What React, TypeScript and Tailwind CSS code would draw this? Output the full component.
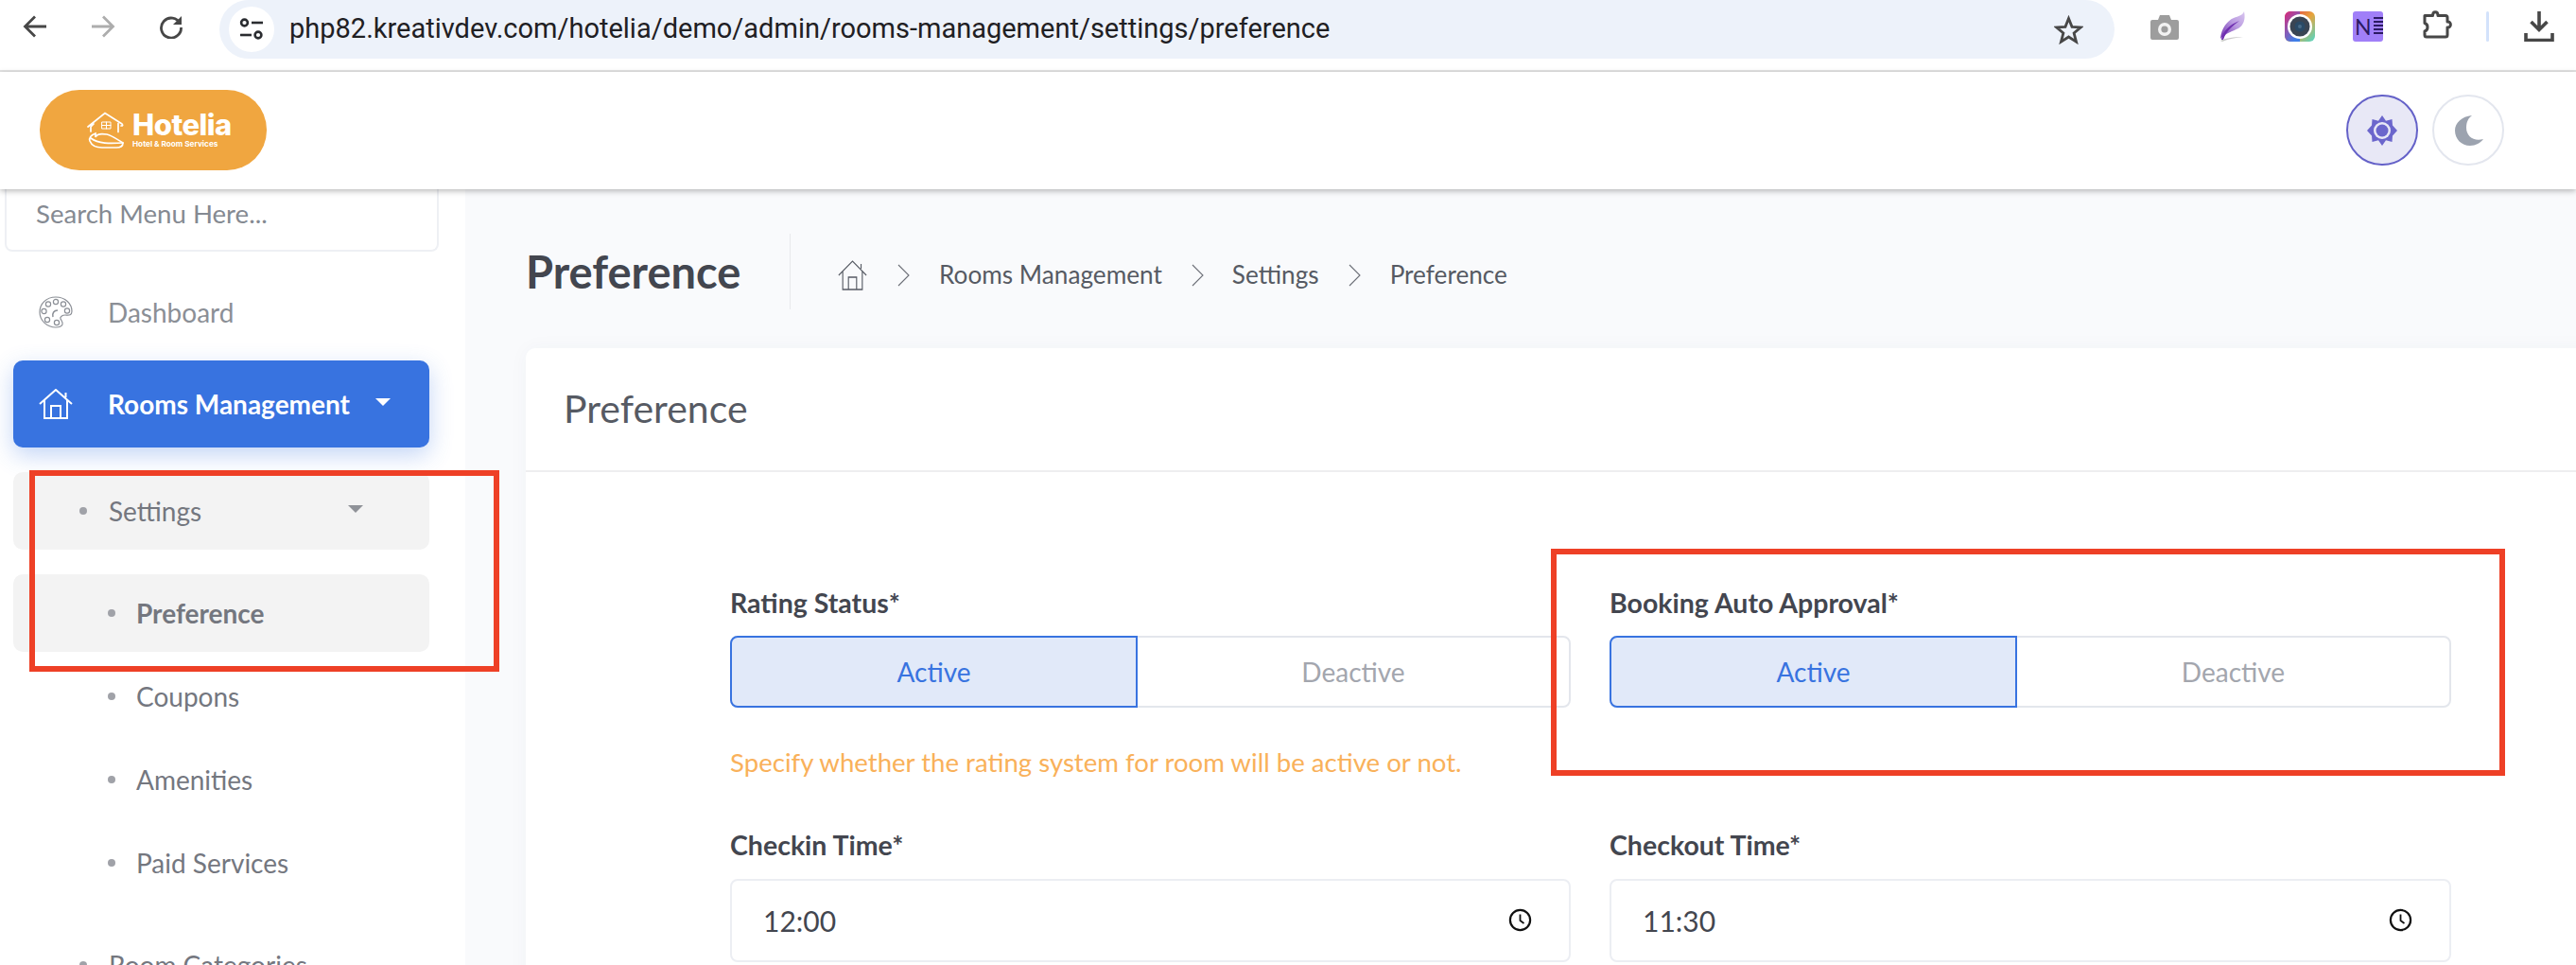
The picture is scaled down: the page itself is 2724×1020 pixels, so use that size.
import React from "react";

const Back = ({ c = "#474747", flip = false }: { c?: string; flip?: boolean }) => (
  <svg width="26" height="26" viewBox="0 0 26 26" fill="none" stroke={c} strokeWidth="2.8" style={{ transform: flip ? "scaleX(-1)" : undefined }}>
    <path d="M25 13H3M13 2.5 2.5 13 13 23.5" />
  </svg>
);

const Reload = () => (
  <svg width="26" height="26" viewBox="0 0 26 26" fill="none" stroke="#474747" strokeWidth="2.8">
    <path d="M22.5 10A10.5 10.5 0 1 0 23.5 14" />
    <path d="M24 2v9h-9" fill="#474747" stroke="none" />
  </svg>
);

const Tune = () => (
  <svg width="26" height="24" viewBox="0 0 26 24" fill="none" stroke="#2a2c30" strokeWidth="2.6">
    <circle cx="5.5" cy="5" r="3.4" />
    <path d="M13 5h12" />
    <circle cx="20" cy="18" r="3.4" />
    <path d="M1 18h12" />
  </svg>
);

const Star = () => (
  <svg width="31" height="31" viewBox="0 0 31 31" fill="none" stroke="#474747" strokeWidth="2.8" strokeLinejoin="miter">
    <path d="M15.5 3.5 19 12.3l9.4.6-7.3 6 2.4 9.2-8-5.1-8 5.1 2.4-9.2-7.3-6 9.4-.6z" />
  </svg>
);

const Camera = () => (
  <svg width="30" height="28" viewBox="0 0 30 28">
    <path d="M2 6h6l2-5h10l2 5h6a2 2 0 0 1 2 2v17a2 2 0 0 1-2 2H2a2 2 0 0 1-2-2V8a2 2 0 0 1 2-2z" fill="#9d9d9d" />
    <circle cx="15" cy="16" r="7" fill="#f2f2f2" />
    <circle cx="15" cy="16" r="3.6" fill="#9d9d9d" />
  </svg>
);

const Feather = () => (
  <svg width="30" height="32" viewBox="0 0 30 32">
    <defs>
      <linearGradient id="fe" x1="0" y1="1" x2="1" y2="0">
        <stop offset="0" stopColor="#6f2fb0" />
        <stop offset="0.55" stopColor="#b99ae0" />
        <stop offset="1" stopColor="#d9c6ef" />
      </linearGradient>
    </defs>
    <path d="M1 29C2 18 8 10 15 7c5-2 10-3 11-7 2 9-1 15-6 18-6 3-14 5-19 11z" fill="url(#fe)" />
    <path d="M2 30c1-9 9-16 19-20-7 5-14 11-17 20z" fill="#6f2fb0" />
    <path d="M1 31c6-3 14-4 24-4-8 1-15 2-22 5z" fill="#c9c9c9" />
  </svg>
);

const Lens = () => (
  <svg width="32" height="32" viewBox="0 0 32 32">
    <defs>
      <linearGradient id="le" x1="0" y1="0" x2="1" y2="1">
        <stop offset="0" stopColor="#e0264e" />
        <stop offset="0.5" stopColor="#e8a33a" />
        <stop offset="1" stopColor="#4fd8c8" />
      </linearGradient>
      <linearGradient id="lf" x1="0" y1="0" x2="0.6" y2="1">
        <stop offset="0" stopColor="#d9277f" stopOpacity="0.9" />
        <stop offset="1" stopColor="#3f7fe8" />
      </linearGradient>
    </defs>
    <rect width="32" height="32" rx="6" fill="url(#le)" />
    <path d="M6 0H16V32H6a6 6 0 0 1-6-6V6a6 6 0 0 1 6-6z" fill="url(#lf)" />
    <circle cx="16" cy="16" r="13" fill="#fff" />
    <circle cx="16" cy="16" r="10.5" fill="#3a4553" />
    <circle cx="16" cy="16" r="5.5" fill="#2a4a66" />
    <circle cx="16" cy="16" r="2" fill="#4a6c88" />
  </svg>
);

const Puzzle = () => (
  <svg width="32" height="32" viewBox="0 0 32 32" fill="none" stroke="#474747" strokeWidth="3" strokeLinejoin="round">
    <path d="M3 6.5h8.5c0-5 5.5-5 5.5 0H25a2 2 0 0 1 2 2V13c4.500-.5 4.500 6.500 0 6v8a2 2 0 0 1-2 2H5a2 2 0 0 1-2-2v-4c4-1 4-7.500 0-8.500z" />
  </svg>
);

const Download = () => (
  <svg width="32" height="32" viewBox="0 0 32 32" fill="none" stroke="#474747" strokeWidth="3.6">
    <path d="M16 0v19M7.500 11 16 19.500 24.500 11M2 23v7.500h28V23" />
  </svg>
);

const HouseLogo = () => (
  <svg width="40" height="40" viewBox="0 0 40 40" fill="none" stroke="#fff" strokeWidth="1.7" strokeLinecap="round">
    <path d="M1 16 19 1.500 37 13c1 1 1 2-1 2M7 13l-3 3v5M33 12.500v9" />
    <path d="M16 11h9v7h-9zM20.500 11v7M16 14.500h9" strokeWidth="1" />
    <path d="M9 23c-5 2-7 5-6 8 2 5 8 7 13 7h15c5 0 7-2 7-5-5-3-12-8-17-9-6-1-11 0-12 3z" />
    <path d="M4 28c8 6 20 6 34 5" />
  </svg>
);

const Sun = () => (
  <svg width="32" height="32" viewBox="0 0 32 32">
    <path fill="#6b66cc" d="M16 0l4 5.700 6.500-1.800.5 6.600L32 16l-5 5.500-.5 6.600-6.500-1.800L16 32l-4-5.700-6.500 1.800-.5-6.600L0 16l5-5.500.5-6.600 6.500 1.800z" />
    <circle cx="16" cy="16" r="9" fill="#e8e8f6" />
    <circle cx="16" cy="16" r="6.500" fill="#6b66cc" />
  </svg>
);

const Moon = () => (
  <svg width="30" height="32" viewBox="0 0 30 32">
    <path fill="#9ca3af" d="M18 0C7 1 0 8 0 16c0 9 7 16 16 16 6 0 11-3 14-7-10 3-18-3-18-12 0-6 2-10 6-13z" />
  </svg>
);

const Palette = () => (
  <svg width="36" height="34" viewBox="0 0 36 34" fill="none" stroke="#8b8f96" strokeWidth="1.2">
    <path d="M18 1C8 1 1 8 1 17s8 16 17 16c4 0 6-1 7-3s-1-4-2-6 2-4 5-4 7 1 7-4C35 8 28 1 18 1z" />
    <circle cx="18" cy="6" r="2.600" />
    <circle cx="10" cy="8.500" r="2.600" />
    <circle cx="26" cy="8.500" r="2.600" />
    <circle cx="5.500" cy="16" r="2.600" />
    <circle cx="30" cy="15.500" r="2.600" />
    <circle cx="9" cy="25" r="2.600" />
    <circle cx="19" cy="28" r="2.600" />
    <path d="M15 22c-1-4 1-7 5-7" strokeWidth="1.500" />
  </svg>
);

const HomeIcon = ({ c, sw, w, h }: { c: string; sw: number; w: number; h: number }) => (
  <svg width={w} height={h} viewBox="0 0 36 32" fill="none" stroke={c} strokeWidth={sw} preserveAspectRatio="none">
    <path d="M1 16 18 1l17 15M28.500 9V4M6 12v19h24V12M13 31V18h10v13" />
  </svg>
);

const Chevron = () => (
  <svg width="13" height="24" viewBox="0 0 13 24" fill="none" stroke="#6b6e76" strokeWidth="1.100">
    <path d="M1 1l11 11L1 23" />
  </svg>
);

const Clock = () => (
  <svg width="25" height="25" viewBox="0 0 25 25" fill="none" stroke="#111" strokeWidth="2.200">
    <circle cx="12.500" cy="12.500" r="10.600" />
    <path d="M12.500 6.500v6.500l4 3" strokeWidth="1.800" />
  </svg>
);

const Caret = ({ c }: { c: string }) => (
  <svg width="16" height="8" viewBox="0 0 16 8">
    <path d="M0 0h16L8 8z" fill={c} />
  </svg>
);

const Dot = () => <span className="w-2 h-2 rounded-full bg-[#a0a2a8] shrink-0" />;

const SubItem = ({ label, bold, active }: { label: string; bold?: boolean; active?: boolean }) => (
  <div className={`flex items-center h-[82px] rounded-[10px] pl-[100px] gap-[22px] text-[28px] text-[#74777f] ${active ? "bg-[#f3f3f3]" : ""} ${bold ? "font-bold" : ""}`}>
    <Dot />
    <span>{label}</span>
  </div>
);

const Toggle = () => (
  <div className="flex h-[76px] rounded-lg border-2 border-[#e3e6ec]">
    <div className="w-[431px] -m-[2px] mr-0 flex items-center justify-center rounded-l-lg border-2 border-[#3873e0] bg-[#e1e9f9] text-[#3873e0] text-[28px]">Active</div>
    <div className="flex-1 flex items-center justify-center text-[#a3a6ae] text-[28px]">Deactive</div>
  </div>
);

const TimeInput = ({ value }: { value: string }) => (
  <div className="flex items-center justify-between h-[88px] rounded-lg border-2 border-[#eceef3] pl-[33px] pr-[39px] text-[#43464f] text-[30px]">
    <span>{value}</span>
    <span className="-mt-[1px]"><Clock /></span>
  </div>
);

const Label = ({ children }: { children: React.ReactNode }) => (
  <div className="h-[36px] flex items-center text-[28.5px] font-bold text-[#43464f]">{children}</div>
);

export default function App() {
  return (
    <div className="relative w-[2724px] h-[1020px] overflow-hidden bg-white font-['Lato',sans-serif] flex flex-col">
      {/* browser toolbar */}
      <div className="h-[76px] shrink-0 border-b-2 border-[#e3e3e3] flex bg-white">
        <div className="flex items-start pl-[24px] pt-[15px] gap-[46px] w-[232px]">
          <Back />
          <Back c="#adadad" flip />
          <Reload />
        </div>
        <div className="w-[2004px] h-[62px] bg-[#edf2fa] rounded-r-[31px] rounded-l-[31px] flex items-center pl-[10px] pr-[33px]">
          <div className="w-[48px] h-[48px] rounded-full bg-white flex items-center justify-center">
            <Tune />
          </div>
          <span className="ml-[16px] flex-1 font-['Roboto',sans-serif] text-[29px] text-[#1f2023]">php82.kreativdev.com/hotelia/demo/admin/rooms-management/settings/preference</span>
          <Star />
        </div>
        <div className="flex items-start pt-[12px]">
          <div className="ml-[38px] mt-[3px]"><Camera /></div>
          <div className="ml-[43px]"><Feather /></div>
          <div className="ml-[39px]"><Lens /></div>
          <div className="ml-[40px] w-[32px] h-[32px] rounded-[3px] bg-[#a07ff8] flex items-center text-[#2b1a63] text-[23px] leading-none pl-[2px]">
            <span>N</span>
            <span className="ml-[2px] w-[11px] h-[20px] bg-[repeating-linear-gradient(#2b1a63_0_2px,transparent_2px_4px)]" />
          </div>
          <div className="ml-[41px] -mt-[2px]"><Puzzle /></div>
          <div className="ml-[36px] w-[3px] h-[32px] rounded bg-[#d3e2fb]" />
          <div className="ml-[37px]"><Download /></div>
        </div>
      </div>

      {/* site header */}
      <div className="relative z-10 h-[124px] shrink-0 bg-white shadow-[0_2px_6px_rgba(0,0,0,0.28)] flex items-center justify-between pl-[42px] pr-[76px]">
        <div className="w-[240px] h-[85px] -mt-[1px] rounded-[42px] bg-[#f0a640] flex items-center pl-[50px] gap-[8px]">
          <HouseLogo />
          <div className="flex flex-col text-white font-['Inter',sans-serif] -mt-[1px]">
            <span className="text-[31px] leading-[30px] font-extrabold tracking-[-0.5px]">Hotelia</span>
            <span className="text-[8.2px] leading-[10px] font-bold">Hotel &amp; Room Services</span>
          </div>
        </div>
        <div className="flex gap-[15px] -mt-[1px]">
          <div className="w-[76px] h-[75px] rounded-full border-2 border-[#6461c8] bg-[#e8e8f6] flex items-center justify-center"><Sun /></div>
          <div className="w-[76px] h-[75px] rounded-full border-2 border-[#e3e6ee] flex items-center justify-center pl-[2px]"><Moon /></div>
        </div>
      </div>

      <div className="flex flex-1 min-h-0">
        {/* sidebar */}
        <div className="w-[492px] shrink-0 bg-white">
          <div className="ml-[5px] w-[459px] h-[66px] border-2 border-t-0 border-[#eef0f4] rounded-b-lg flex items-center pl-[31px] text-[27.6px] text-[#858a92] pb-[12px]">Search Menu Here...</div>
          <div className="flex items-center h-[115px] pt-[13px] pl-[41px] gap-[37px] text-[28px] text-[#8b8f96]">
            <Palette />
            <span>Dashboard</span>
          </div>
          <div className="mx-[14px] w-[440px] h-[92px] rounded-[10px] bg-[#3873e0] shadow-[0_8px_24px_rgba(56,115,224,0.3)] flex items-center pl-[27px] text-white text-[28px] font-bold">
            <HomeIcon c="#fff" sw={2} w={36} h={32} />
            <span className="ml-[37px]">Rooms Management</span>
            <span className="ml-[27px] -mt-[4px]"><Caret c="#fff" /></span>
          </div>
          <div className="mt-[26px] mx-[14px] w-[440px] h-[82px] rounded-[10px] bg-[#f3f3f3] flex items-center pl-[70px] gap-[23px] text-[28px] text-[#74777f]">
            <Dot />
            <span className="flex-1">Settings</span>
            <span className="mr-[70px] -mt-[4px]"><Caret c="#8f9298" /></span>
          </div>
          <div className="mt-[26px] mx-[14px] w-[440px] flex flex-col gap-[6px]">
            <SubItem label="Preference" bold active />
            <SubItem label="Coupons" />
            <SubItem label="Amenities" />
            <SubItem label="Paid Services" />
          </div>
          <div className="mt-[26px] mx-[14px] h-[82px] flex items-center pl-[70px] gap-[23px] text-[28px] text-[#74777f]">
            <Dot />
            <span>Room Categories</span>
          </div>
        </div>

        {/* main */}
        <div className="flex-1 min-w-0 bg-[#f9fafc] pl-[64px]">
          <div className="flex items-center h-[168px] pt-[6px]">
            <h1 className="text-[47px] font-bold text-[#43464f] w-[279px]">Preference</h1>
            <div className="w-px h-[80px] bg-[#e8e9ec]" />
            <div className="flex items-center ml-[50px] mt-[8px] text-[26.2px] text-[#565a63]">
              <HomeIcon c="#565a63" sw={1.3} w={31} h={32} />
              <span className="ml-[32px]"><Chevron /></span>
              <span className="ml-[31px]">Rooms Management</span>
              <span className="ml-[31px]"><Chevron /></span>
              <span className="ml-[30px]">Settings</span>
              <span className="ml-[31px]"><Chevron /></span>
              <span className="ml-[31px]">Preference</span>
            </div>
          </div>
          <div className="w-[2260px] h-[800px] rounded-[10px] bg-white shadow-[0_0_20px_rgba(60,70,100,0.04)]">
            <div className="h-[131px] border-b-2 border-[#eeeef0] flex items-center pl-[40px] pb-[2px] text-[41px] text-[#565a63]">Preference</div>
            <div className="pl-[216px] pt-[120px] grid grid-cols-[889px_890px] gap-x-[41px]">
              <div>
                <Label>Rating Status*</Label>
                <div className="mt-[17px]"><Toggle /></div>
                <div className="mt-[41px] h-[34px] flex items-center text-[27.6px] text-[#f9b15a]">Specify whether the rating system for room will be active or not.</div>
                <div className="mt-[52px]"><Label>Checkin Time*</Label></div>
                <div className="mt-[18px]"><TimeInput value="12:00" /></div>
              </div>
              <div>
                <Label>Booking Auto Approval*</Label>
                <div className="mt-[17px]"><Toggle /></div>
                <div className="mt-[127px]"><Label>Checkout Time*</Label></div>
                <div className="mt-[18px]"><TimeInput value="11:30" /></div>
              </div>
            </div>
          </div>
        </div>
      </div>

      {/* annotation boxes */}
      <div className="absolute left-[31px] top-[497px] w-[497px] h-[213px] border-[6px] border-[#ee4026] z-20" />
      <div className="absolute left-[1640px] top-[580px] w-[1009px] h-[240px] border-[6px] border-[#ee4026] z-20" />
    </div>
  );
}
